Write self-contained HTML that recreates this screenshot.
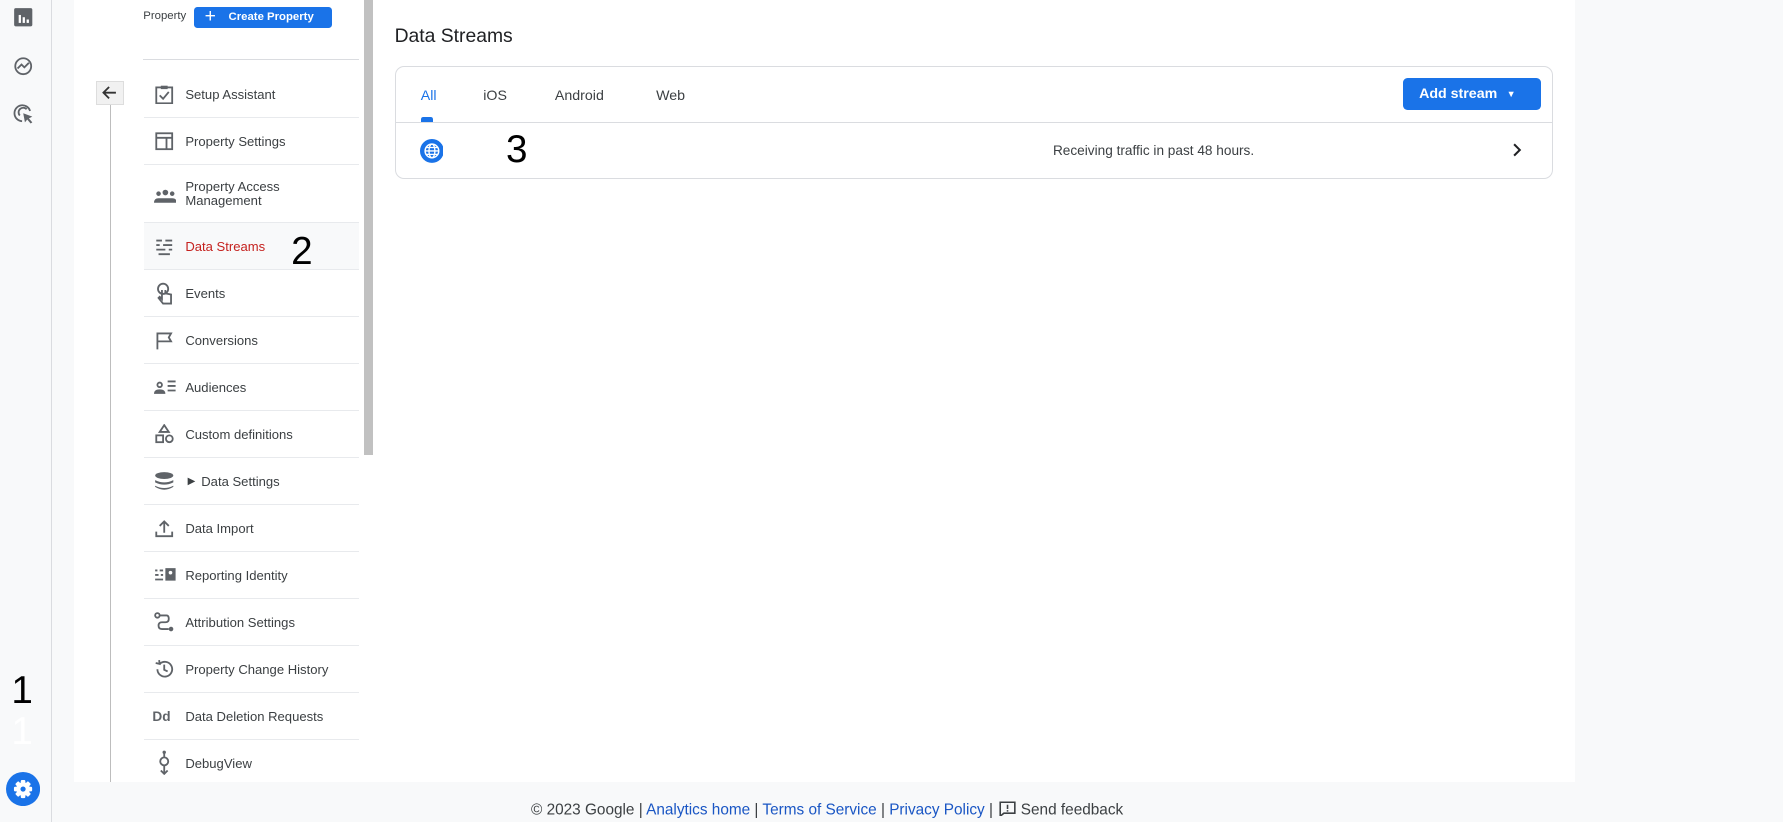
<!DOCTYPE html>
<html><head><meta charset="utf-8">
<style>
html,body{margin:0;padding:0;width:1783px;height:822px;overflow:hidden;background:#f8f9fa}
#w{zoom:1.1371;width:1568px;height:723px;position:relative;font-family:"Liberation Sans",Arial,sans-serif;color:#3c4043;background:#f8f9fa}
.a{position:absolute}
.rail{left:0;top:0;width:45px;height:723px;background:#f8f9fa;border-right:1px solid #dadce0}
.main{left:65px;top:0;width:1320px;height:688px;background:#fff}
.row{position:absolute;left:127px;width:189px;border-bottom:1px solid #e8eaed;display:flex;align-items:center;font-size:11.5px;color:#3c4043}
.row svg{position:absolute;left:8px}
.row span{position:absolute;left:36px;line-height:13px;margin-top:2px}
.ic{fill:none;stroke:#5f6368;stroke-width:1.6}
</style></head><body><div id="w">
<div class="a rail"></div>
<svg class="a" style="left:11px;top:6px" width="18" height="18" viewBox="0 0 18 18"><rect x="1" y="1" width="16" height="16" rx="1.5" fill="#5f6368"/><rect x="5" y="7" width="2" height="7" fill="#fff"/><rect x="8.5" y="9" width="2" height="5" fill="#fff"/><rect x="12" y="11" width="2" height="3" fill="#fff"/></svg>
<svg class="a" style="left:11px;top:49px" width="18" height="18" viewBox="0 0 18 18"><circle cx="9" cy="9" r="7" class="ic" stroke-width="2"/><path d="M4 11 L7.5 7.5 L10 10 L14 6" class="ic" stroke-width="1.8"/></svg>
<svg class="a" style="left:11px;top:91px" width="20" height="20" viewBox="0 0 20 20"><path d="M15 7 A7 7 0 1 0 8 16" class="ic" stroke-width="2"/><path d="M12 5.5 A4 4 0 1 0 6 11" class="ic" stroke-width="2"/><path d="M9 9 L17 12 L14 13.5 L17 17 L15.5 18 L12.5 14.5 L10.5 17 Z" fill="#5f6368"/></svg>
<div class="a" style="left:10px;top:588px;font-size:34px;color:#000">1</div>
<div class="a" style="left:10px;top:624px;font-size:34px;color:#fff">1</div>
<svg class="a" style="left:5px;top:679px" width="30" height="30" viewBox="0 0 30 30"><circle cx="15" cy="15" r="15" fill="#1a73e8"/><g fill="#fff"><rect x="13" y="7" width="4" height="16" rx="1"/><rect x="13" y="7" width="4" height="16" rx="1" transform="rotate(45 15 15)"/><rect x="13" y="7" width="4" height="16" rx="1" transform="rotate(90 15 15)"/><rect x="13" y="7" width="4" height="16" rx="1" transform="rotate(135 15 15)"/><circle cx="15" cy="15" r="6"/></g><circle cx="15" cy="15" r="2.3" fill="#1a73e8"/></svg>
<div class="a main"></div>
<div class="a" style="left:126px;top:9px;font-size:10px;color:#3c4043">Property</div>
<div class="a" style="left:171px;top:6px;width:121px;height:19px;background:#1a73e8;border-radius:3px;color:#fff;font-size:10px;font-weight:bold;line-height:19px"><span style="font-size:17px;font-weight:normal;position:absolute;left:9px;top:-1px">+</span><span style="position:absolute;left:30px">Create Property</span></div>
<div class="a" style="left:126px;top:52px;width:190px;height:1px;background:#dadce0"></div>
<div class="a" style="left:320px;top:0;width:8px;height:400px;background:#c1c1c1"></div>
<div class="a" style="left:97px;top:72px;width:1px;height:616px;background:#bdbdbd"></div>
<div class="a" style="left:84px;top:71px;width:25px;height:21px;background:#f1f1f1;border:1px solid #ddd;box-sizing:border-box"></div>
<svg class="a" style="left:88px;top:73px" width="17" height="17" viewBox="0 0 17 17"><path d="M14 8.5H3 M8 3.5 L3 8.5 L8 13.5" fill="none" stroke="#333" stroke-width="1.6"/></svg>

<div class="row" style="top:62px;height:41px"><svg width="18" height="18" viewBox="0 0 18 18"><rect x="2" y="3" width="14" height="14" class="ic"/><rect x="6" y="1.5" width="6" height="3" fill="#5f6368"/><path d="M5 10 L8 13 L13 7" class="ic"/></svg><span>Setup Assistant</span></div>
<div class="row" style="top:104px;height:40px"><svg width="18" height="18" viewBox="0 0 18 18"><rect x="2" y="2" width="14" height="14" class="ic"/><path d="M2 6H16 M11 6V16" class="ic"/></svg><span>Property Settings</span></div>
<div class="row" style="top:145px;height:50px"><svg width="20" height="14" viewBox="0 0 20 14" style="top:20px"><circle cx="4" cy="5" r="2" fill="#5f6368"/><circle cx="10" cy="4" r="2.5" fill="#5f6368"/><circle cx="16" cy="5" r="2" fill="#5f6368"/><path d="M0 13 Q0 9 4 9 L16 9 Q20 9 20 13 Z" fill="#5f6368"/></svg><span>Property Access<br>Management</span></div>
<div class="row" style="top:196px;height:41px;background:#f8f9fa"><svg width="18" height="18" viewBox="0 0 18 18"><path d="M2 4H7 M10 4H16 M2 8H5 M8 8H16 M2 12H10 M13 12H16 M4 16H14" stroke="#5f6368" stroke-width="1.6"/></svg><span style="color:#c5221f">Data Streams</span></div>
<div class="a" style="left:256px;top:202px;font-size:34px;color:#000">2</div>
<div class="row" style="top:238px;height:40px"><svg width="18" height="20" viewBox="0 0 18 20"><circle cx="8" cy="6" r="4.5" class="ic"/><path d="M7 7V15 L5 13 L4 14 L8 19 H15 V11 L10 10 V7" class="ic"/></svg><span>Events</span></div>
<div class="row" style="top:279px;height:40px"><svg width="18" height="18" viewBox="0 0 18 18"><path d="M3 17V3H15 L13 6.5 L15 10H3" class="ic"/></svg><span>Conversions</span></div>
<div class="row" style="top:320px;height:41px"><svg width="20" height="16" viewBox="0 0 20 16"><circle cx="5" cy="6" r="2" class="ic"/><path d="M0 14 Q0 10 5 10 Q10 10 10 14Z" fill="#5f6368"/><path d="M12 3H19 M12 7H19 M12 11H19" class="ic"/></svg><span>Audiences</span></div>
<div class="row" style="top:362px;height:40px"><svg width="18" height="18" viewBox="0 0 18 18"><path d="M9 1 L13 7 H5Z" class="ic"/><rect x="2" y="10" width="6" height="6" class="ic"/><circle cx="13.5" cy="13" r="3" class="ic"/></svg><span>Custom definitions</span></div>
<div class="row" style="top:403px;height:40px"><svg width="18" height="18" viewBox="0 0 18 18"><ellipse cx="9" cy="4" rx="8" ry="3" fill="#5f6368"/><path d="M1 8 Q9 12 17 8 V10 Q9 14 1 10Z M1 13 Q9 17 17 13 V14 Q9 19 1 14Z" fill="#5f6368"/></svg><span style="left:38px;font-size:9px">▶</span><span style="left:50px">Data Settings</span></div>
<div class="row" style="top:444px;height:41px"><svg width="18" height="18" viewBox="0 0 18 18"><path d="M9 13V3 M5 7 L9 3 L13 7 M2 12V16H16V12" class="ic"/></svg><span>Data Import</span></div>
<div class="row" style="top:486px;height:40px"><svg width="20" height="14" viewBox="0 0 20 14"><path d="M1 3H3 M5 3H8 M1 7H4 M6 7H8 M1 11H8" class="ic" stroke-width="1.4"/><rect x="10" y="1" width="9" height="11" fill="#5f6368"/><circle cx="14.5" cy="5" r="1.6" fill="#fff"/></svg><span>Reporting Identity</span></div>
<div class="row" style="top:527px;height:40px"><svg width="18" height="18" viewBox="0 0 18 18"><circle cx="3" cy="3" r="2" class="ic"/><path d="M5 3H11 Q13 3 13 6 Q13 9 10 9 H7 Q4 9 4 12 Q4 15 7 15 H13" class="ic"/><circle cx="15" cy="15" r="2" fill="#5f6368"/></svg><span>Attribution Settings</span></div>
<div class="row" style="top:568px;height:41px"><svg width="18" height="18" viewBox="0 0 18 18"><path d="M3 9 A6.5 6.5 0 1 0 5 4.3" class="ic"/><path d="M1.5 3.5 L5 4.3 L4.5 1" class="ic"/><path d="M9 5V9.5L12 11" class="ic"/></svg><span>Property Change History</span></div>
<div class="row" style="top:610px;height:40px"><span style="left:7px;font-weight:bold;color:#5f6368;font-size:12px">Dd</span><span>Data Deletion Requests</span></div>
<div class="row" style="top:651px;height:40px;border-bottom:none"><svg width="18" height="22" viewBox="0 0 18 22"><path d="M9 1V6 M9 14V20" class="ic"/><circle cx="9" cy="2" r="1.5" fill="#5f6368"/><circle cx="9" cy="10" r="3.5" class="ic"/><path d="M6 18 L9 21 L12 18" class="ic"/></svg><span>DebugView</span></div>

<div class="a" style="left:347px;top:23px;font-size:17px;color:#202124">Data Streams</div>
<div class="a" style="left:347px;top:58px;width:1019px;height:99px;border:1px solid #dadce0;border-radius:8px;box-sizing:border-box"></div>
<div class="a" style="left:348px;top:107px;width:1017px;height:1px;background:#dadce0"></div>
<div class="a" style="left:370px;top:77px;font-size:12.5px;color:#1a73e8">All</div>
<div class="a" style="left:370px;top:103px;width:11px;height:4px;background:#1a73e8;border-radius:2px 2px 0 0"></div>
<div class="a" style="left:425px;top:77px;font-size:12.5px">iOS</div>
<div class="a" style="left:488px;top:77px;font-size:12.5px">Android</div>
<div class="a" style="left:577px;top:77px;font-size:12.5px">Web</div>
<div class="a" style="left:1234px;top:69px;width:121px;height:28px;background:#1a73e8;border-radius:4px;color:#fff;font-size:12.5px;font-weight:bold;line-height:29px"><span style="position:absolute;left:14px">Add stream</span><span style="position:absolute;left:91px;top:0;font-size:8px">▼</span></div>
<svg class="a" style="left:369px;top:122px" width="21" height="21" viewBox="0 0 21 21"><circle cx="10.5" cy="10.5" r="10.5" fill="#1a73e8"/><circle cx="10.5" cy="10.5" r="6" fill="none" stroke="#fff" stroke-width="1.3"/><ellipse cx="10.5" cy="10.5" rx="2.6" ry="6" fill="none" stroke="#fff" stroke-width="1.2"/><path d="M4.5 10.5H16.5 M5.5 7.5H15.5 M5.5 13.5H15.5" stroke="#fff" stroke-width="1.1"/></svg>
<div class="a" style="left:445px;top:113px;font-size:34px;color:#000">3</div>
<div class="a" style="left:926px;top:126px;font-size:12px;color:#3c4043">Receiving traffic in past 48 hours.</div>
<svg class="a" style="left:1327px;top:125px" width="14" height="14" viewBox="0 0 14 14"><path d="M4.5 2 L9.5 7 L4.5 12" fill="none" stroke="#202124" stroke-width="1.8"/></svg>

<div class="a" style="left:467px;top:704px;font-size:13.5px;color:#3c4043;white-space:nowrap">© 2023 Google | <span style="color:#1a56c4">Analytics home</span> | <span style="color:#1a56c4">Terms of Service</span> | <span style="color:#1a56c4">Privacy Policy</span> | <svg width="15" height="14" viewBox="0 0 14 13" style="vertical-align:-2px;margin-left:2px"><path d="M1 1H13V10H4L1 12.5Z" fill="none" stroke="#3c4043" stroke-width="1.3"/><path d="M7 3V6.5 M7 7.5V8.7" stroke="#3c4043" stroke-width="1.3"/></svg> Send feedback</div>
</div></body></html>
